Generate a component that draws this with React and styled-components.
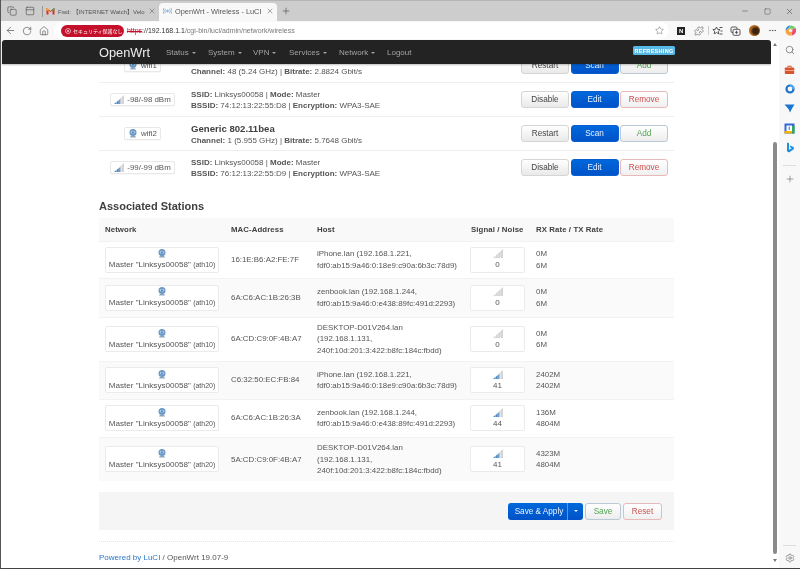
import React from 'react';
import styled, { createGlobalStyle } from 'styled-components';
import { ArrowLeft, RotateCw, Home, Star, Puzzle, Minus, Square, X, Plus, Ellipsis, Search, Settings, Copy, PanelTop } from 'lucide-react';

const Global = createGlobalStyle`
  html, body { margin: 0; padding: 0; width: 800px; height: 569px; overflow: hidden; background: #fff; }
  body { font-family: "Liberation Sans", Arial, sans-serif; color: #555; font-size: 8px; }
  * { box-sizing: border-box; }
`;

const Win = styled.div`
  width: 800px; height: 569px; display: flex; flex-direction: column; overflow: hidden;
  border-left: 1px solid #555; border-bottom: 1px solid #444; background: #fff; filter: blur(.3px);
`;
const TabBar = styled.div`
  height: 21px; background: #cdcdcd; border-top: 1px solid #b5b5b5; display: flex; align-items: flex-end; padding-left: 2px; color: #333; flex: none;
`;
const TabTool = styled.div`
  width: 18px; height: 17px; display: flex; align-items: center; justify-content: center; color: #444; align-self: center;
`;
const Sep = styled.div`
  width: 1px; height: 11px; background: #999; align-self: center; margin: 0 2px 0 3px;
`;
const Tab = styled.div`
  width: ${p => p.$w}px; height: 18px; display: flex; align-items: center; gap: 3px; padding: 0 3px 2px ${p => p.$pl}px;
  white-space: nowrap; overflow: hidden; border-radius: 4px 4px 0 0; background: ${p => (p.$active ? '#f8f8f8' : 'transparent')};
  color: #555;
`;
const TabTitle = styled.span`
  flex: 1; overflow: hidden; white-space: nowrap; font-size: ${p => p.$fs}px;
  font-family: "Liberation Sans", "Noto Sans CJK JP", sans-serif;
`;
const WinButtons = styled.div`
  margin-left: auto; display: flex; align-self: center; gap: 12px; padding-right: 6px; color: #444; align-items: center;
`;
const WinBtn = styled.div`
  width: 10px; height: 10px; display: flex; align-items: center; justify-content: center;
`;
const AddrBar = styled.div`
  height: 19px; background: #f8f8f8; display: flex; align-items: center; flex: none; padding-left: 2px; color: #444;
`;
const NavBtn = styled.div`
  width: 15px; height: 15px; display: flex; align-items: center; justify-content: center; margin-right: 2px;
`;
const Url = styled.div`
  width: 616px; height: 17px; background: #fff; border-radius: 9px; display: flex; align-items: center; padding-left: 7px; font-size: 7px; color: #777; white-space: nowrap;
`;
const Insecure = styled.div`
  width: 63px; height: 12px; border-radius: 6px; background: #c4102b; color: #fff; display: flex; align-items: center; gap: 2px; padding-left: 4px; font-size: 5px; margin-right: 3px;
  font-family: "Noto Sans CJK JP", sans-serif; flex: none; overflow: hidden; white-space: nowrap;
`;
const Https = styled.span`
  color: #c4102b; text-decoration: line-through;
`;
const Host = styled.span`
  color: #333;
`;
const UrlStar = styled.div`
  margin-left: auto; margin-right: 3px; display: flex; color: #555; width: 11px;
`;
const ExtRow = styled.div`
  display: flex; align-items: center; margin-left: 3px; color: #444;
`;
const ExtItem = styled.div`
  width: 18.3px; display: flex; justify-content: center; align-items: center;
`;
const ExtSep = styled.div`
  width: 1px; height: 9px; background: #ccc; margin: 0 -.5px;
`;
const Notion = styled.div`
  width: 8px; height: 8px; background: #222; color: #fff; font-size: 6px; font-weight: 700; display: flex; align-items: center; justify-content: center;
`;
const Avatar = styled.div`
  width: 11px; height: 11px; border-radius: 50%; background: radial-gradient(circle at 60% 55%, #3a2410 0 30%, #b8701f 60%, #8a4d12 100%);
`;
const Body = styled.div`
  flex: 1; display: flex; min-height: 0;
`;
const Main = styled.div`
  width: 770px; position: relative; overflow: hidden; background: #fff;
`;
const Navbar = styled.div`
  position: absolute; top: 0; left: 1px; width: 769px; height: 24px; background: #232323; border-radius: 3px 3px 0 0; display: flex; align-items: center; padding-left: 97px; z-index: 2; color: #9d9d9d; box-shadow: 0 1px 2px rgba(0,0,0,.25);
`;
const Brand = styled.div`
  color: #eee; font-size: 12.8px; width: 67px;
`;
const Menu = styled.div`
  font-size: 8px; width: ${p => p.$w}px; white-space: nowrap; color: #a3a3a3;
`;
const Caret = styled.span`
  display: inline-block; width: 0; height: 0; margin-left: 3px; vertical-align: 1px; border-left: 2px solid transparent; border-right: 2px solid transparent; border-top: 2px solid #a3a3a3;
`;
const Refreshing = styled.div`
  position: absolute; left: 631px; top: 6px; width: 42px; height: 9px; background: #57b9e6; border-radius: 1.5px; color: #fff; font-size: 5.5px; font-weight: 700; letter-spacing: .3px; display: flex; align-items: center; justify-content: center; white-space: nowrap;
`;
const Content = styled.div`
  padding: 8px 97px 0 98px;
`;
const DevRow = styled.div`
  height: 34px; display: grid; grid-template-columns: 87px 1fr auto; align-items: center; padding-right: 6px; border-top: ${p => (p.$first ? 'none' : '1px solid #eee')};
`;
const BadgeCell = styled.div`
  display: flex; justify-content: center;
`;
const Badge = styled.div`
  height: 13.5px; display: inline-flex; align-items: center; gap: 3px; padding: 0 3px; background: #fff; border: 1px solid #e8e8e8; border-radius: 2px; font-size: 7.9px; color: #555; white-space: nowrap; box-shadow: 0 1px 1px rgba(0,0,0,.03);
`;
const Info = styled.div`
  padding-left: 5px; font-size: 8px; line-height: 11px; color: #555; white-space: nowrap;
`;
const DevTitle = styled.div`
  font-size: 9.6px; font-weight: 700; height: 13px; line-height: 13px; color: #404040;
`;
const Buttons = styled.div`
  display: flex; gap: 1.5px;
`;
const variants = {
  plain: { c: '#444', b: '#d5d5d5', bg: 'linear-gradient(#fff, #e9e9e9)' },
  blue: { c: '#e8f2ff', b: '#0a5fd0', bg: 'linear-gradient(#0068dc, #0052c8)' },
  green: { c: '#54a354', b: '#b9c9d8', bg: 'linear-gradient(#fff, #ededed)' },
  red: { c: '#c9504f', b: '#e9b8b8', bg: 'linear-gradient(#fff, #f0f0f0)' },
};
const Btn = styled.div`
  width: ${p => p.$w || 48}px; height: 17px; border-radius: 3px; display: flex; align-items: center; justify-content: center; font-size: 8.2px;
  color: ${p => variants[p.$v].c}; border: 1px solid ${p => variants[p.$v].b}; background: ${p => variants[p.$v].bg};
`;
const Heading = styled.h3`
  margin: 15px 0 5px; font-size: 11px; line-height: 14px; color: #404040; font-weight: 700;
`;
const Table = styled.table`
  width: 575px; border-collapse: collapse; table-layout: fixed; font-size: 7.9px; color: #555;
`;
const Th = styled.th`
  width: ${p => p.$w}px; height: 23px; background: #f9f9f9; text-align: left; padding: 0 6px; font-weight: 700; font-size: 7.8px; color: #404040; letter-spacing: .1px;
`;
const Tr = styled.tr`
  height: ${p => p.$h}px; background: ${p => (p.$odd ? '#fafafa' : '#fff')}; border-top: 1px solid #f2f2f2;
`;
const Td = styled.td`
  padding: 0 6px; vertical-align: middle; line-height: 11.2px; font-size: 7.9px; overflow: hidden;
`;
const NetBox = styled.div`
  height: 26px; border: 1px solid #ebebeb; border-radius: 2px; display: flex; flex-direction: column; gap: 2px; align-items: center; justify-content: center; background: #fff; line-height: 10px; font-size: 8.1px; white-space: nowrap; color: #555;
`;
const NetSmall = styled.span`
  font-size: 7px;
`;
const SigBox = styled(NetBox)`
  width: 55px; margin-left: -1px; font-size: 8px;
`;
const FormActions = styled.div`
  margin-top: 11px; height: 38px; background: #f5f5f5; display: flex; align-items: center; justify-content: flex-end; gap: 2px; padding-right: 12px;
`;
const ApplyGroup = styled.div`
  display: flex; width: 75px; height: 17px; border-radius: 3px; overflow: hidden; color: #eaf3ff; font-size: 8.2px; background: linear-gradient(#0068dc, #0052c8);
`;
const ApplyMain = styled.div`
  flex: 1; display: flex; align-items: center; justify-content: center; padding-left: 3px; white-space: nowrap; border-right: 1px solid #5a94e2;
`;
const ApplyCaret = styled.div`
  width: 15px; display: flex; align-items: center; justify-content: center;
  &::after { content: ""; border-left: 2px solid transparent; border-right: 2px solid transparent; border-top: 2.5px solid #eaf3ff; }
`;
const Dotted = styled.div`
  margin-top: 11px; border-top: 1px dotted #e4e4e4;
`;
const Footer = styled.div`
  margin-top: 11px; font-size: 8px; line-height: 10px; color: #555; white-space: nowrap;
`;
const PoweredLink = styled.span`
  color: #2a77c9;
`;
const Scrollbar = styled.div`
  width: 8px; background: #fff; display: flex; flex-direction: column; align-items: center; padding-top: 3px; flex: none;
`;
const ArrowUp = styled.div`
  flex: none; border-left: 2.5px solid transparent; border-right: 2.5px solid transparent; border-bottom: 3.5px solid #777;
`;
const ArrowDown = styled.div`
  flex: none; margin-top: 5px; border-left: 2.5px solid transparent; border-right: 2.5px solid transparent; border-top: 3.5px solid #777;
`;
const Track = styled.div`
  margin-top: 96px; width: 4.5px; height: 412px; background: #8b8b8b; border-radius: 2px; flex: none;
`;
const Sidebar = styled.div`
  width: 21px; background: #f8f8f8; display: flex; flex-direction: column; align-items: center; padding-top: .5px; flex: none; color: #555;
`;
const SideItem = styled.div`
  height: 19.5px; width: 100%; display: flex; align-items: center; justify-content: center;
`;
const SideDiv = styled.div`
  width: 13px; height: 1px; background: #ddd; margin: ${p => p.$m};
`;
const SideSpacer = styled.div`
  flex: 1;
`;

const RadioIcon = () => (
  <svg width="10" height="9" viewBox="0 0 10 9">
    <circle cx="5" cy="3.6" r="3.500" fill="#6b98c6" />
    <ellipse cx="5" cy="3.2" rx="2.300" ry="1.200" fill="#b9d2e8" />
    <circle cx="5" cy="3.300" r=".9" fill="#3f74a8" />
    <path d="M2.800 7h4.400l.8 1.500H2z" fill="#8ea6bc" />
  </svg>
);
const SignalIcon = ({ level }) => (
  <svg width="10" height="9" viewBox="0 0 10 9">
    <path d="M0 9h10V0z" fill="#d4d4d4" />
    {level > 0 && <path d="M0 9h6.200V4.200z" fill="#4f8bc9" />}
    <path d="M2.500 0v9M5 0v9M7.500 0v9" stroke="#fff" strokeWidth=".35" />
  </svg>
);
const Gmail = () => (
  <svg width="9" height="8" viewBox="0 0 9 8">
    <path d="M.5 1v6.500h2V3.500L4.500 5l2-1.500v4h2V1L4.500 4z" fill="#d93025" />
    <path d="M.5 1v2l2 1.500V2z" fill="#f4b400" /><path d="M6.500 2v2.500l2-1.500V1z" fill="#34a853" />
  </svg>
);
const TabWifi = () => (
  <svg width="9" height="8" viewBox="0 0 9 8" fill="none" stroke="#8fb4dc" strokeWidth=".9">
    <circle cx="4.500" cy="4" r=".9" fill="#8fb4dc" />
    <path d="M2.500 2a3 3 0 0 0 0 4M6.500 2a3 3 0 0 1 0 4M1 1a5 5 0 0 0 0 6M8 1a5 5 0 0 1 0 6" />
  </svg>
);
const Favorites = () => (
  <svg width="11" height="10" viewBox="0 0 11 10" fill="none" stroke="#444" strokeWidth=".9">
    <path d="M4.500 1l1.100 2.300 2.500.3-1.800 1.700.5 2.500-2.300-1.200-2.300 1.200.5-2.500L.9 3.600l2.500-.3z" />
    <path d="M7.500 1.500h3M8.500 5h2M7.500 8h3" />
  </svg>
);
const Collections = () => (
  <svg width="11" height="10" viewBox="0 0 11 10" fill="none" stroke="#444" strokeWidth=".9">
    <rect x="1" y="1" width="6" height="5.500" rx="1.200" />
    <rect x="3" y="3.300" width="7" height="6" rx="1.200" fill="#f8f8f8" />
    <path d="M6.500 4.800v3M5 6.300h3" />
  </svg>
);
const Copilot = () => (
  <svg width="11" height="11" viewBox="0 0 11 11">
    <path d="M5.500.5a5 5 0 0 0-5 5l3-2z" fill="#2f8fe8" />
    <path d="M5.500.5l-2 3 4 .5 3-1a5 5 0 0 0-5-2.500z" fill="#6fcf6f" />
    <path d="M10.500 3l-3 1-1 6.500a5 5 0 0 0 4-7.500z" fill="#e94f7a" />
    <path d="M.5 5.500a5 5 0 0 0 6 5l1-6.500-4-.5z" fill="#f7a23b" />
    <circle cx="5.500" cy="5.500" r="1.600" fill="#f8f8f8" />
  </svg>
);
const Toolbox = () => (
  <svg width="11" height="10" viewBox="0 0 11 10">
    <path d="M3.800 2.500V1.200h3.400v1.300" fill="none" stroke="#c9482b" strokeWidth=".9" />
    <rect x=".8" y="2.500" width="9.400" height="6.500" rx=".8" fill="#d9532c" />
    <rect x=".8" y="5" width="9.400" height=".8" fill="#f2b8a5" />
  </svg>
);
const Calendar = () => (
  <svg width="11" height="11" viewBox="0 0 11 11">
    <rect x=".5" y=".5" width="10" height="10" fill="#3367d6" />
    <rect x=".5" y="8" width="7.500" height="2.500" fill="#f4b400" />
    <rect x="8" y="3" width="2.500" height="7.500" fill="#34a853" />
    <rect x="2.500" y="2.500" width="5.500" height="5.500" fill="#fff" />
    <rect x="4.700" y="3.500" width="1" height="3.500" fill="#3367d6" />
  </svg>
);
const Wheel = () => (
  <svg width="10" height="10" viewBox="0 0 10 10">
    <circle cx="5" cy="5" r="3.500" fill="none" stroke="#1a73c9" strokeWidth="2.200" />
    <path d="M5 .5A4.500 4.500 0 0 1 9.500 5H7.500A2.500 2.500 0 0 0 5 2.500z" fill="#4dabf0" />
  </svg>
);
const Bird = () => (
  <svg width="11" height="9" viewBox="0 0 11 9">
    <path d="M.5.5L10.500.5 8 4.500 6 8.500 4.500 5z" fill="#1678d2" />
  </svg>
);
const Bing = () => (
  <svg width="8" height="11" viewBox="0 0 8 11">
    <path d="M1 .5l2 .8v6.500l2.700-1.500-1.300-.7-.8-2 4.200 1.500v2.200L3 10.500 1 9.200z" fill="#1b8fe0" />
  </svg>
);

const devices = [
  { badge: 'wifi1', first: true, title: '', ch: '48 (5.24 GHz)', rate: '2.8824 Gbit/s' },
  { sig: '-98/-98 dBm', bssid: '74:12:13:22:55:D8' },
  { badge: 'wifi2', title: 'Generic 802.11bea', ch: '1 (5.955 GHz)', rate: '5.7648 Gbit/s' },
  { sig: '-99/-99 dBm', bssid: '76:12:13:22:55:D9' },
];

const stations = [
  { iface: 'ath10', mac: '16:1E:B6:A2:FE:7F', host: ['iPhone.lan (192.168.1.221,', 'fdf0:ab15:9a46:0:18e9:c90a:6b3c:78d9)'], sig: 0, rx: '0M', tx: '6M', h: 37 },
  { iface: 'ath10', mac: '6A:C6:AC:1B:26:3B', host: ['zenbook.lan (192.168.1.244,', 'fdf0:ab15:9a46:0:e438:89fc:491d:2293)'], sig: 0, rx: '0M', tx: '6M', h: 39 },
  { iface: 'ath10', mac: '6A:CD:C9:0F:4B:A7', host: ['DESKTOP-D01V264.lan', '(192.168.1.131,', '240f:10d:201:3:422:b8fc:184c:fbdd)'], sig: 0, rx: '0M', tx: '6M', h: 44 },
  { iface: 'ath20', mac: 'C6:32:50:EC:FB:84', host: ['iPhone.lan (192.168.1.221,', 'fdf0:ab15:9a46:0:18e9:c90a:6b3c:78d9)'], sig: 41, rx: '2402M', tx: '2402M', h: 38 },
  { iface: 'ath20', mac: '6A:C6:AC:1B:26:3A', host: ['zenbook.lan (192.168.1.244,', 'fdf0:ab15:9a46:0:e438:89fc:491d:2293)'], sig: 44, rx: '136M', tx: '4804M', h: 38 },
  { iface: 'ath20', mac: '5A:CD:C9:0F:4B:A7', host: ['DESKTOP-D01V264.lan', '(192.168.1.131,', '240f:10d:201:3:422:b8fc:184c:fbdd)'], sig: 41, rx: '4323M', tx: '4804M', h: 44 },
];

const Lines = ({ items }) => items.map((t, i) => <div key={i}>{t}</div>);

export default function App() {
  return (
    <>
      <Global />
      <Win>
        <TabBar>
          <TabTool><Copy size={10} strokeWidth={1.4} /></TabTool>
          <TabTool><PanelTop size={10} strokeWidth={1.4} /></TabTool>
          <Sep />
          <Tab $w={114} $pl={1}><Gmail /><TabTitle $fs={6}>Fwd: 【INTERNET Watch】Velop WiF</TabTitle><X size={8} strokeWidth={1.5} /></Tab>
          <Tab $w={118} $pl={4} $active><TabWifi /><TabTitle $fs={7.4}>OpenWrt - Wireless - LuCI</TabTitle><X size={8} strokeWidth={1.5} /></Tab>
          <TabTool><Plus size={10} strokeWidth={1.4} /></TabTool>
          <WinButtons>
            <WinBtn><Minus size={8} strokeWidth={1.5} /></WinBtn>
            <WinBtn><Square size={7} strokeWidth={1.5} /></WinBtn>
            <WinBtn><X size={9} strokeWidth={1.5} /></WinBtn>
          </WinButtons>
        </TabBar>
        <AddrBar>
          <NavBtn><ArrowLeft size={11} strokeWidth={1.4} /></NavBtn>
          <NavBtn><RotateCw size={10} strokeWidth={1.4} /></NavBtn>
          <NavBtn><Home size={10} strokeWidth={1.4} /></NavBtn>
          <Url>
            <Insecure>
              <svg width="6" height="6" viewBox="0 0 6 6" fill="none" stroke="#fff" strokeWidth=".6"><circle cx="3" cy="3" r="2.500" /><path d="M2 2l2 2M4 2L2 4" /></svg>
              セキュリティ保護なし
            </Insecure>
            <Https>https</Https><Host>://192.168.1.1</Host>/cgi-bin/luci/admin/network/wireless
            <UrlStar><Star size={9} strokeWidth={1.2} /></UrlStar>
          </Url>
          <ExtRow>
            <ExtItem><Notion>N</Notion></ExtItem>
            <ExtItem><Puzzle size={10} strokeWidth={1.3} /></ExtItem>
            <ExtSep />
            <ExtItem><Favorites /></ExtItem>
            <ExtItem><Collections /></ExtItem>
            <ExtItem><Avatar /></ExtItem>
            <ExtItem><Ellipsis size={9} strokeWidth={1.5} /></ExtItem>
            <ExtItem><Copilot /></ExtItem>
          </ExtRow>
        </AddrBar>
        <Body>
          <Main>
            <Navbar>
              <Brand>OpenWrt</Brand>
              <Menu $w={42}>Status<Caret /></Menu>
              <Menu $w={45}>System<Caret /></Menu>
              <Menu $w={36}>VPN<Caret /></Menu>
              <Menu $w={50}>Services<Caret /></Menu>
              <Menu $w={48}>Network<Caret /></Menu>
              <Menu $w={40}>Logout</Menu>
              <Refreshing>REFRESHING</Refreshing>
            </Navbar>
            <Content>
              {devices.map((d, i) => (
                <DevRow key={i} $first={d.first}>
                  <BadgeCell>
                    {d.badge
                      ? <Badge><RadioIcon />{d.badge}</Badge>
                      : <Badge><SignalIcon level={1} />{d.sig}</Badge>}
                  </BadgeCell>
                  {d.badge ? (
                    <Info>
                      <DevTitle>{d.title}</DevTitle>
                      <b>Channel:</b> {d.ch} | <b>Bitrate:</b> {d.rate}
                    </Info>
                  ) : (
                    <Info>
                      <b>SSID:</b> Linksys00058 | <b>Mode:</b> Master<br />
                      <b>BSSID:</b> {d.bssid} | <b>Encryption:</b> WPA3-SAE
                    </Info>
                  )}
                  {d.badge ? (
                    <Buttons>
                      <Btn $v="plain">Restart</Btn><Btn $v="blue">Scan</Btn><Btn $v="green">Add</Btn>
                    </Buttons>
                  ) : (
                    <Buttons>
                      <Btn $v="plain">Disable</Btn><Btn $v="blue">Edit</Btn><Btn $v="red">Remove</Btn>
                    </Buttons>
                  )}
                </DevRow>
              ))}
              <Heading>Associated Stations</Heading>
              <Table>
                <thead>
                  <tr>
                    <Th $w={126}>Network</Th>
                    <Th $w={86}>MAC-Address</Th>
                    <Th $w={154}>Host</Th>
                    <Th $w={65}>Signal / Noise</Th>
                    <Th $w={144}>RX Rate / TX Rate</Th>
                  </tr>
                </thead>
                <tbody>
                  {stations.map((s, i) => (
                    <Tr key={i} $h={s.h} $odd={i % 2 === 1}>
                      <Td>
                        <NetBox>
                          <RadioIcon />
                          <span>Master "Linksys00058" <NetSmall>({s.iface})</NetSmall></span>
                        </NetBox>
                      </Td>
                      <Td>{s.mac}</Td>
                      <Td><Lines items={s.host} /></Td>
                      <Td>
                        <SigBox>
                          <SignalIcon level={s.sig} />
                          <span>{s.sig}</span>
                        </SigBox>
                      </Td>
                      <Td><div>{s.rx}</div><div>{s.tx}</div></Td>
                    </Tr>
                  ))}
                </tbody>
              </Table>
              <FormActions>
                <ApplyGroup><ApplyMain>Save &amp; Apply</ApplyMain><ApplyCaret /></ApplyGroup>
                <Btn $v="green" $w={36}>Save</Btn>
                <Btn $v="red" $w={39}>Reset</Btn>
              </FormActions>
              <Dotted />
              <Footer><PoweredLink>Powered by LuCI</PoweredLink> / OpenWrt 19.07-9</Footer>
            </Content>
          </Main>
          <Scrollbar>
            <ArrowUp />
            <Track />
            <ArrowDown />
          </Scrollbar>
          <Sidebar>
            <SideItem><Search size={10} strokeWidth={1.5} /></SideItem>
            <SideItem><Toolbox /></SideItem>
            <SideItem><Wheel /></SideItem>
            <SideItem><Bird /></SideItem>
            <SideItem><Calendar /></SideItem>
            <SideItem><Bing /></SideItem>
            <SideDiv $m="7px 0 4px" />
            <SideItem><Plus size={10} strokeWidth={1.3} /></SideItem>
            <SideSpacer />
            <SideDiv $m="0 0 3px" />
            <SideItem><Settings size={10} strokeWidth={1.3} /></SideItem>
          </Sidebar>
        </Body>
      </Win>
    </>
  );
}
